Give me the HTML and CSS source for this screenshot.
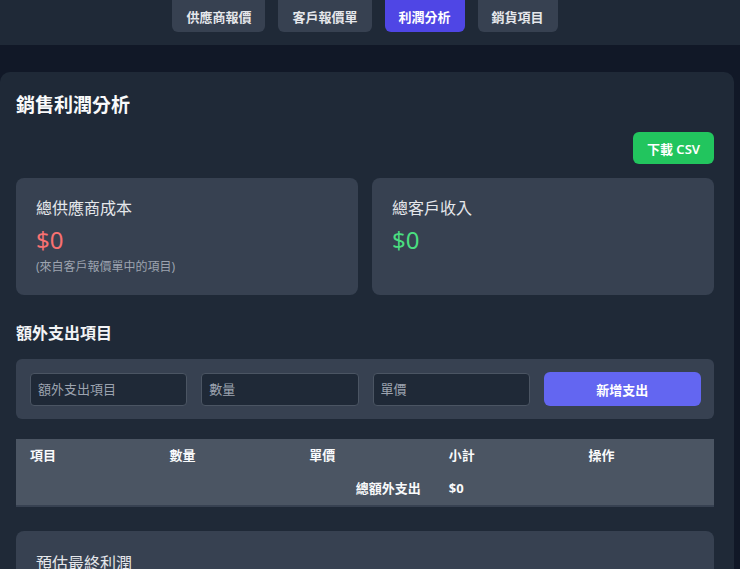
FILE: index.html
```html
<!DOCTYPE html>
<html lang="zh-Hant">
<head>
  <meta charset="UTF-8">
  <title>銷售利潤分析</title>
  <link rel="stylesheet" href="styles.css">
</head>
<body>
  <header class="topbar">
    <nav class="tabs">
      <button class="tab">供應商報價</button>
      <button class="tab">客戶報價單</button>
      <button class="tab active">利潤分析</button>
      <button class="tab">銷貨項目</button>
    </nav>
  </header>

  <main class="panel">
    <h1 class="panel-title">銷售利潤分析</h1>

    <div class="toolbar">
      <button class="btn-csv">下載 CSV</button>
    </div>

    <section class="stats">
      <div class="stat-card">
        <div class="stat-label">總供應商成本</div>
        <div class="stat-value cost">$0</div>
        <div class="stat-note">(來自客戶報價單中的項目)</div>
      </div>
      <div class="stat-card">
        <div class="stat-label">總客戶收入</div>
        <div class="stat-value income">$0</div>
      </div>
    </section>

    <h2 class="section-title">額外支出項目</h2>

    <form class="expense-form">
      <input type="text" placeholder="額外支出項目">
      <input type="text" placeholder="數量">
      <input type="text" placeholder="單價">
      <button type="button" class="btn-add">新增支出</button>
    </form>

    <table class="expense-table">
      <thead>
        <tr>
          <th>項目</th>
          <th>數量</th>
          <th>單價</th>
          <th>小計</th>
          <th>操作</th>
        </tr>
      </thead>
      <tfoot>
        <tr>
          <td colspan="3" class="total-label">總額外支出</td>
          <td>$0</td>
          <td></td>
        </tr>
      </tfoot>
    </table>

    <section class="profit-card">
      <div class="profit-label">預估最終利潤</div>
    </section>
  </main>
</body>
</html>
```

FILE: styles.css
```css
body {
  margin: 0;
  background: #111827;
  color: #f3f4f6;
  font-family: "Noto Sans", "Noto Sans CJK TC", sans-serif;
  overflow: hidden;
}

/* Top navigation */
.topbar {
  background: #1f2937;
  height: 45px;
}

.tabs {
  display: flex;
  justify-content: center;
  gap: 13px;
  padding-right: 10px;
}

.tab {
  height: 32px;
  padding: 0 14px;
  border: none;
  border-radius: 0 0 6px 6px;
  background: #374151;
  color: #e5e7eb;
  font-family: inherit;
  font-size: 13px;
  font-weight: 700;
}

.tab.active {
  background: #4f46e5;
  color: #fff;
}

/* Main panel */
.panel {
  background: #1f2937;
  margin: 27px 6px 0 0;
  padding: 16px 20px 16px 16px;
  border-radius: 10px 10px 0 0;
  height: 600px;
}

.panel-title {
  margin: 2px 0 0;
  font-size: 19px;
  line-height: 30px;
  font-weight: 700;
  color: #f9fafb;
}

.toolbar {
  display: flex;
  justify-content: flex-end;
  margin-top: 12px;
}

.btn-csv {
  height: 32px;
  padding: 0 14px;
  border: none;
  border-radius: 6px;
  background: #22c55e;
  color: #fff;
  font-family: inherit;
  font-size: 13px;
  font-weight: 600;
}

/* Summary cards */
.stats {
  display: grid;
  grid-template-columns: 1fr 1fr;
  gap: 14px;
  margin-top: 14px;
}

.stat-card {
  background: #374151;
  border-radius: 8px;
  padding: 18px 20px 20px;
}

.stat-label {
  font-size: 16px;
  line-height: 24px;
  color: #e5e7eb;
}

.stat-value {
  margin-top: 4px;
  font-size: 24px;
  line-height: 32px;
}

.stat-value.cost { color: #f87171; }
.stat-value.income { color: #4ade80; }

.stat-note {
  margin-top: 3px;
  font-size: 12px;
  line-height: 16px;
  color: #9ca3af;
}

/* Extra expenses */
.section-title {
  margin: 26px 0 0;
  font-size: 16px;
  line-height: 24px;
  font-weight: 700;
}

.expense-form {
  display: grid;
  grid-template-columns: repeat(4, 1fr);
  gap: 14px;
  align-items: center;
  margin-top: 14px;
  padding: 13px 13px 13px 14px;
  background: #374151;
  border-radius: 6px;
}

.expense-form input {
  box-sizing: border-box;
  height: 33px;
  width: 100%;
  padding: 0 7px;
  border: 1px solid #4b5563;
  border-radius: 4px;
  background: #1f2937;
  color: #f3f4f6;
  font-family: inherit;
  font-size: 13px;
}

.expense-form input::placeholder {
  color: #9ca3af;
}

.btn-add {
  height: 34px;
  border: none;
  border-radius: 6px;
  background: #6366f1;
  color: #fff;
  font-family: inherit;
  font-size: 13px;
  font-weight: 700;
}

.expense-table {
  width: 100%;
  margin-top: 20px;
  border-collapse: collapse;
  table-layout: fixed;
  background: #4b5563;
  border-bottom: 2px solid #374151;
  font-size: 13px;
}

.expense-table th {
  height: 31px;
  padding: 0 14px;
  text-align: left;
  font-weight: 700;
  color: #f9fafb;
}

.expense-table td {
  height: 35px;
  padding: 0 14px;
  font-weight: 700;
  color: #f9fafb;
}

.expense-table td.total-label {
  text-align: right;
}

/* Profit card */
.profit-card {
  margin-top: 24px;
  padding: 20px;
  background: #374151;
  border-radius: 8px;
}

.profit-label {
  font-size: 16px;
  line-height: 24px;
  color: #e5e7eb;
}
```
